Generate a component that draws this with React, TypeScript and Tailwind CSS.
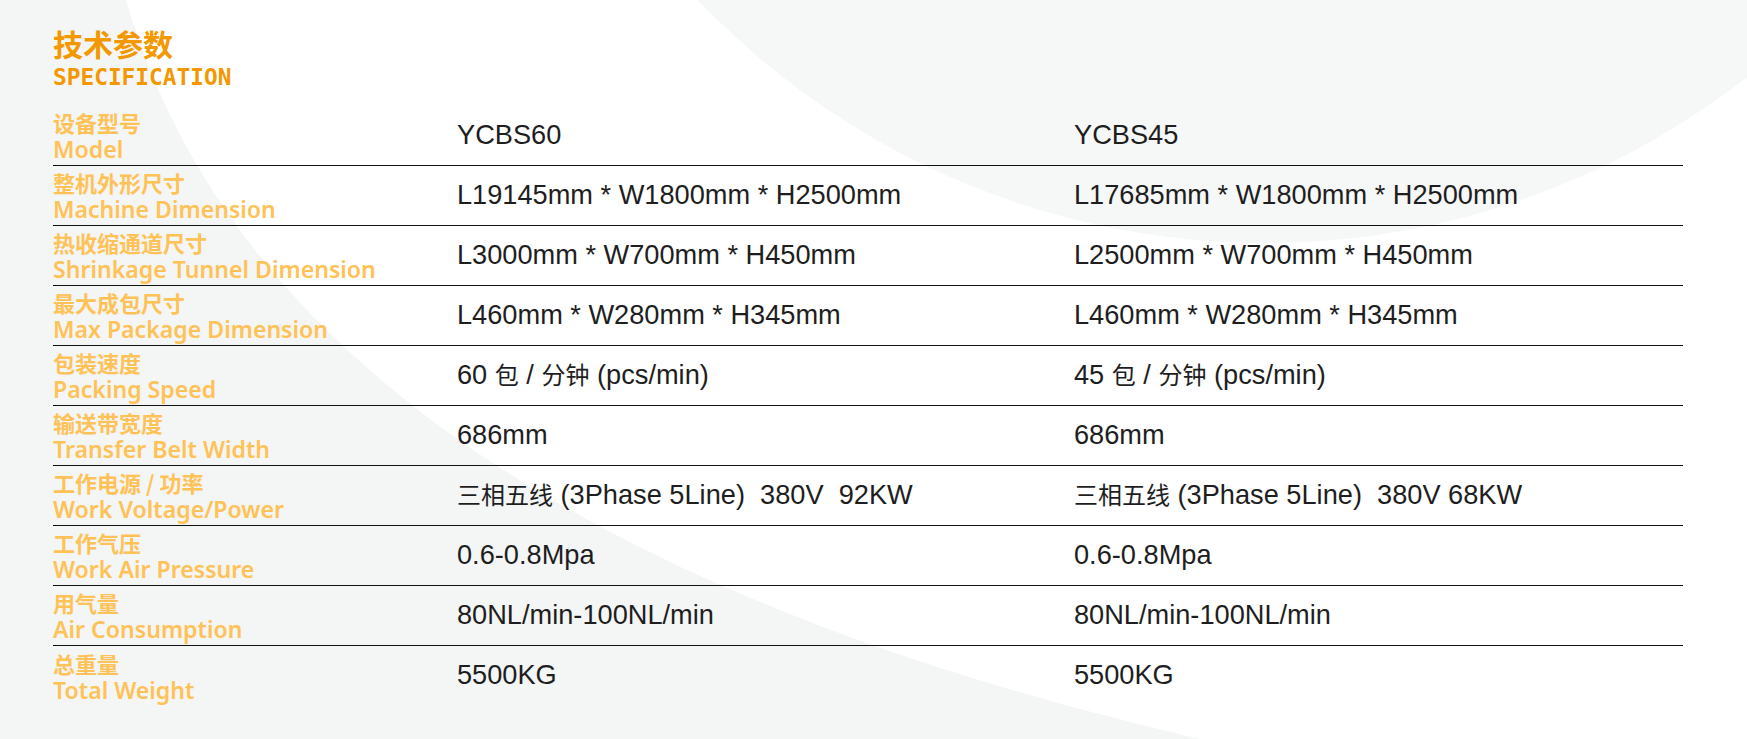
const rows = [
  { cn: "设备型号", en: "Model", a: "YCBS60", b: "YCBS45" },
  { cn: "整机外形尺寸", en: "Machine Dimension", a: "L19145mm * W1800mm * H2500mm", b: "L17685mm * W1800mm * H2500mm" },
  { cn: "热收缩通道尺寸", en: "Shrinkage Tunnel Dimension", a: "L3000mm * W700mm * H450mm", b: "L2500mm * W700mm * H450mm" },
  { cn: "最大成包尺寸", en: "Max Package Dimension", a: "L460mm * W280mm * H345mm", b: "L460mm * W280mm * H345mm" },
  { cn: "包装速度", en: "Packing Speed", a: "60 包 / 分钟 (pcs/min)", b: "45 包 / 分钟 (pcs/min)" },
  { cn: "输送带宽度", en: "Transfer Belt Width", a: "686mm", b: "686mm" },
  { cn: "工作电源 / 功率", en: "Work Voltage/Power", a: "三相五线 (3Phase 5Line)  380V  92KW", b: "三相五线 (3Phase 5Line)  380V 68KW" },
  { cn: "工作气压", en: "Work Air Pressure", a: "0.6-0.8Mpa", b: "0.6-0.8Mpa" },
  { cn: "用气量", en: "Air Consumption", a: "80NL/min-100NL/min", b: "80NL/min-100NL/min" },
  { cn: "总重量", en: "Total Weight", a: "5500KG", b: "5500KG" },
];

// soft grey sweeps behind the sheet
function Backdrop() {
  return (
    <svg className="absolute inset-0" width="1747" height="739" viewBox="0 0 1747 739">
      <path d="M0 0 L126 0 C230 360 600 600 1200 739 L0 739 Z" fill="#f4f5f5" />
      <circle cx="1265" cy="-541" r="784" fill="#f6f7f7" />
    </svg>
  );
}

// chinese chars in the values sit a touch smaller than the latin text
function Value({ text }: { text: string }) {
  const parts = text.split(/([\u4e00-\u9fff]+)/);
  return (
    <div className="text-[27.2px] text-[#1e1e1e] whitespace-pre font-['Liberation_Sans','Noto_Sans_CJK_SC',sans-serif]">
      {parts.map((p, i) =>
        /[\u4e00-\u9fff]/.test(p) ? (
          <span key={i} className="text-[24px] font-['Noto_Sans_CJK_SC',sans-serif]">{p}</span>
        ) : (
          <span key={i}>{p}</span>
        )
      )}
    </div>
  );
}

export default function App() {
  return (
    <main className="relative w-[1747px] h-[739px] overflow-hidden bg-white">
      <Backdrop />
      <div className="relative pl-[53px] pt-[28px] w-[1683px]">
        <h1 className="text-[30px] leading-none font-bold text-[#f39800] font-['Noto_Sans_CJK_SC',sans-serif]">
          技术参数
        </h1>
        <div className="mt-[8px] text-[22.8px] leading-none font-bold text-[#f39800] font-['DejaVu_Sans_Mono',monospace]">
          SPECIFICATION
        </div>

        <div className="mt-[17px]">
          {rows.map((r, i) => (
            <div
              key={r.en}
              className={
                "grid grid-cols-[404px_617px_1fr] items-center h-[60px] " +
                (i < rows.length - 1 ? "border-b-[1.5px] border-[#111]" : "")
              }
            >
              <div className="text-[#ffc257] font-semibold">
                <div className="text-[22px] leading-[28px] font-['Noto_Sans_CJK_SC',sans-serif]">{r.cn}</div>
                <div className="text-[23.1px] leading-[26px] font-['Noto_Sans','Noto_Sans_CJK_SC',sans-serif]">{r.en}</div>
              </div>
              <Value text={r.a} />
              <Value text={r.b} />
            </div>
          ))}
        </div>
      </div>
    </main>
  );
}
